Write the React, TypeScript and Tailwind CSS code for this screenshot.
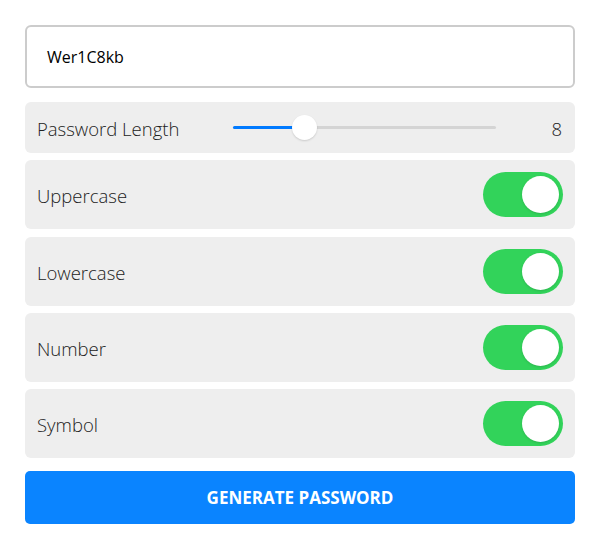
import { useState } from 'react'

const font = { fontFamily: '"Open Sans", "Noto Sans", sans-serif' }

function Toggle({ on, onChange }: { on: boolean; onChange: () => void }) {
  return (
    <button
      onClick={onChange}
      className={`relative h-[45px] w-[80px] rounded-full transition-colors ${on ? 'bg-[#32d35a]' : 'bg-[#d6d6d6]'}`}
    >
      <span
        className={`absolute top-[4px] h-[37px] w-[37px] rounded-full bg-white shadow-sm transition-all ${on ? 'left-[39px]' : 'left-[4px]'}`}
      />
    </button>
  )
}

export default function App() {
  const [length] = useState(8)
  const [opts, setOpts] = useState({ Uppercase: true, Lowercase: true, Number: true, Symbol: true })

  return (
    <div className="min-h-[550px] bg-white px-[25px] pt-[25px]" style={font}>
      <div className="flex h-[63px] items-center rounded-[6px] border-2 border-[#cccccc] px-[20px] text-[16px] text-black">
        Wer1C8kb
      </div>

      <div className="mt-[14px] flex flex-col gap-[7.33px]">
        <div className="flex h-[51px] items-center rounded-[6px] bg-[#eeeeee] pl-[12px] pr-[13px]">
          <span className="w-[196px] pt-[2px] text-[18.5px] font-light text-[#222]">Password Length</span>
          <div className="relative h-[3px] w-[263px] rounded-full bg-[#d4d4d4]">
            <div className="absolute left-0 top-0 h-[3px] w-[71px] rounded-full bg-[#007aff]" />
            <div className="absolute left-[59px] top-[-11px] h-[25px] w-[25px] rounded-full bg-white shadow-[0_1px_2px_rgba(0,0,0,0.15)]" />
          </div>
          <span className="ml-auto pt-[2px] text-[18.5px] font-light text-[#222]">{length}</span>
        </div>

        {(Object.keys(opts) as (keyof typeof opts)[]).map((k) => (
          <div key={k} className="flex h-[69px] items-center justify-between rounded-[6px] bg-[#eeeeee] pl-[12px] pr-[12px]">
            <span className="pt-[3px] text-[18.5px] font-light text-[#222]">{k}</span>
            <Toggle on={opts[k]} onChange={() => setOpts({ ...opts, [k]: !opts[k] })} />
          </div>
        ))}
      </div>

      <button className="mt-[13px] flex h-[53px] w-full items-center justify-center rounded-[5px] bg-[#0a84ff] text-[17px] font-bold text-white">
        GENERATE PASSWORD
      </button>
    </div>
  )
}
